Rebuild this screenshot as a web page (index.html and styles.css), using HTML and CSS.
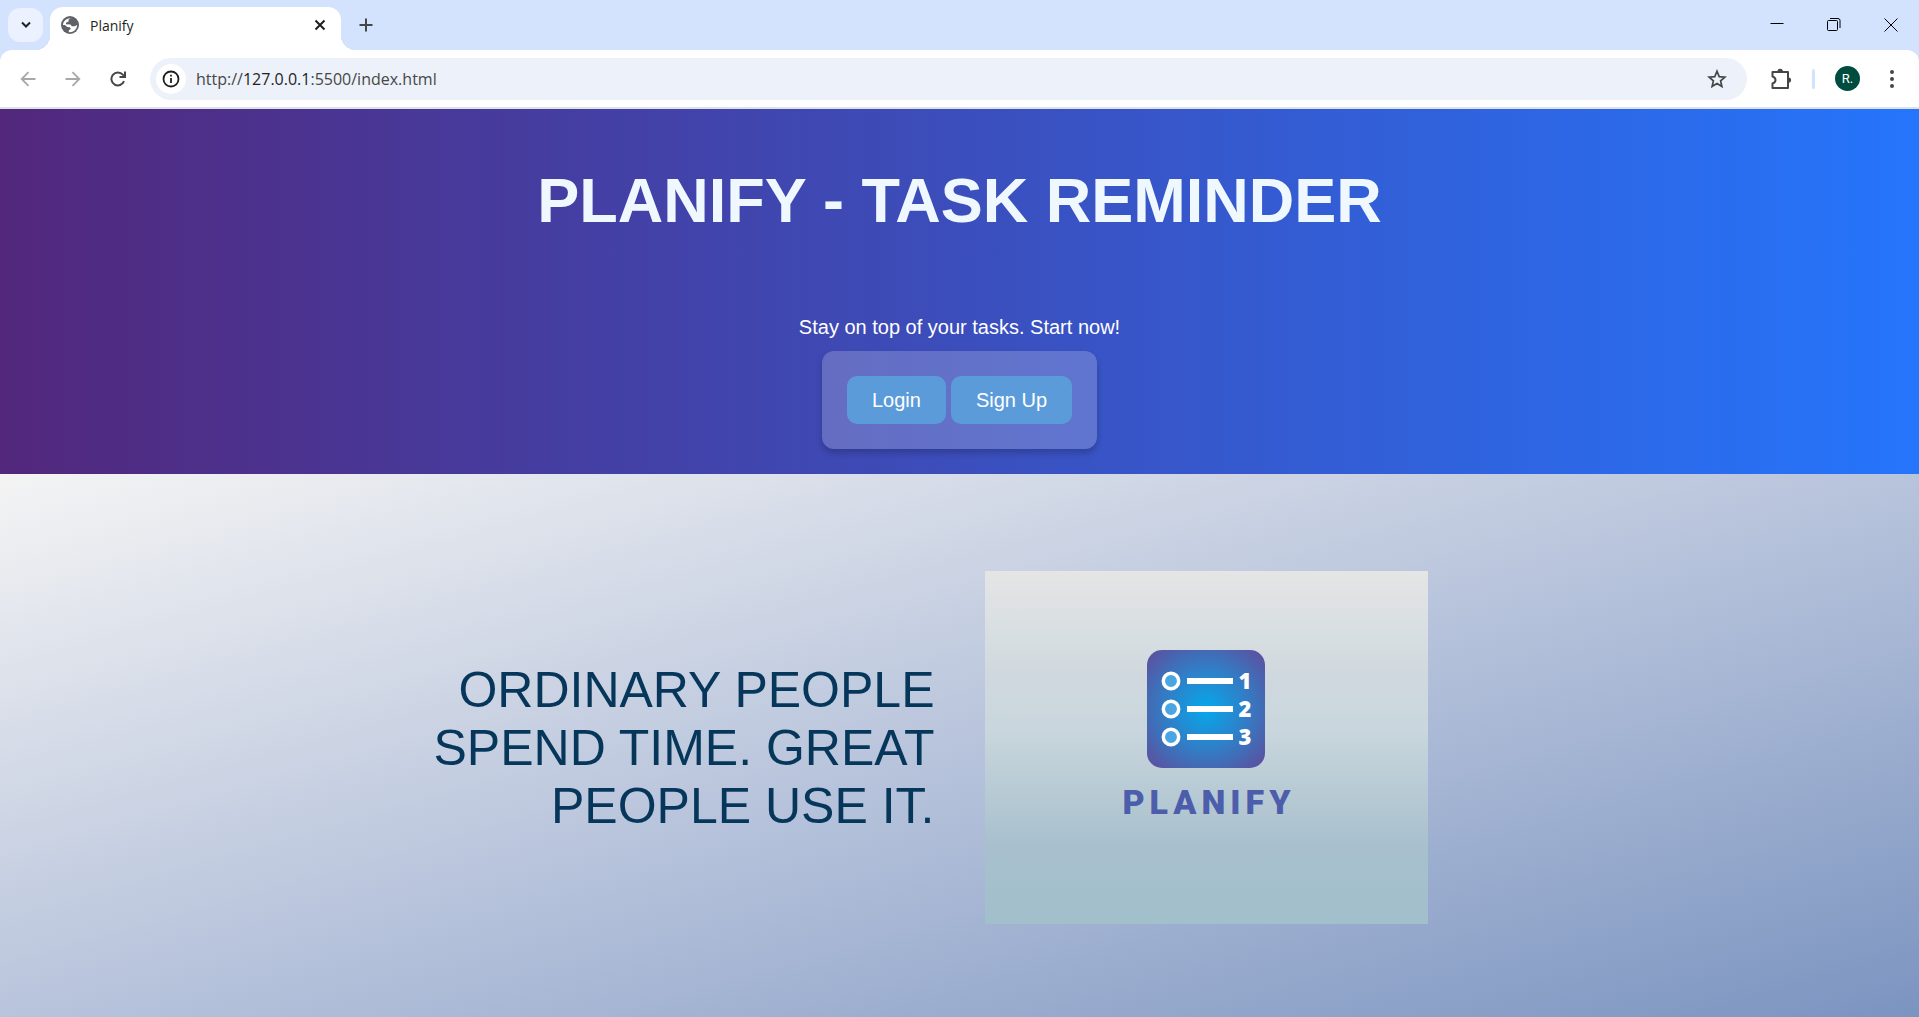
FILE: index.html
```html
<!DOCTYPE html>
<html lang="en">
<head>
<meta charset="utf-8">
<title>Planify</title>
<link rel="stylesheet" href="styles.css">
</head>
<body>
<div class="browser">
  <div class="tabstrip">
    <button class="tab-search" aria-label="Search tabs"><svg width="12" height="8" viewBox="0 0 12 8"><path d="M2 1.5l4 4 4-4" fill="none" stroke="#1f1f1f" stroke-width="2"/></svg></button>
    <div class="tab">
      <svg class="favicon" width="18" height="18" viewBox="0 0 18 18"><circle cx="9" cy="9" r="9" fill="#5f6368"/><path d="M10.5 1.8L7.6 3.4v2.1L5 6.8v1.5l4.5.2 1.3 1.8h2.7l2.7-1.4a7.3 7.3 0 0 1-8.4 7.2v-1.8l2-1.4-1-1.6-2.6-.2-2.3-2.2H1.8a7.3 7.3 0 0 1 8.7-6.6z" fill="#fff"/><path d="M10.5 1.8a7.3 7.3 0 0 1 5.7 6l-2 1.1-2.6-1.7.5-2.2-1.8-1.3z" fill="#5f6368"/></svg>
      <span class="tab-title">Planify</span>
      <button class="plain" aria-label="Close tab"><svg width="12" height="12" viewBox="0 0 12 12"><path d="M1.5 1.5l9 9M10.5 1.5l-9 9" stroke="#1f1f1f" stroke-width="2"/></svg></button>
    </div>
    <button class="plain new-tab" aria-label="New tab"><svg width="14" height="14" viewBox="0 0 14 14"><path d="M7 .5v13M.5 7h13" stroke="#444746" stroke-width="2"/></svg></button>
    <div class="window-controls">
      <button class="plain" aria-label="Minimize"><svg width="14" height="14" viewBox="0 0 14 14"><path d="M.5 5.500h13" stroke="#000"/></svg></button>
      <button class="plain" aria-label="Restore"><svg width="14" height="14" viewBox="0 0 14 14" fill="none" stroke="#000"><rect x=".5" y="2.500" width="10" height="10" rx="1"/><path d="M3 .5h8a2 2 0 0 1 2 2V10"/></svg></button>
      <button class="plain" aria-label="Close"><svg width="14" height="14" viewBox="0 0 14 14"><path d="M.5.5l13 13M13.500.5l-13 13" stroke="#000"/></svg></button>
    </div>
  </div>
  <div class="toolbar">
    <div class="nav">
      <button class="plain" aria-label="Back"><svg width="16" height="16" viewBox="0 0 16 16"><path d="M15.500 8H2M8.500 1.200L1.700 8l6.800 6.800" fill="none" stroke="#a8a8a8" stroke-width="1.800"/></svg></button>
      <button class="plain" aria-label="Forward"><svg width="16" height="16" viewBox="0 0 16 16"><path d="M.5 8H14M7.500 1.200L14.300 8l-6.800 6.800" fill="none" stroke="#a8a8a8" stroke-width="1.800"/></svg></button>
      <button class="plain" aria-label="Reload"><svg width="16" height="16" viewBox="0 0 16 16"><path d="M14 10.200A6.500 6.500 0 1 1 12.800 3.600L14.800 5.600M15 .5V6H9.500" fill="none" stroke="#444746" stroke-width="2"/></svg></button>
    </div>
    <div class="omnibox">
      <button class="site-info" aria-label="View site information"><svg width="18" height="18" viewBox="0 0 18 18"><circle cx="9" cy="9" r="7.500" fill="none" stroke="#1f1f1f" stroke-width="1.800"/><path d="M9 8v5M9 4.800v1.800" stroke="#1f1f1f" stroke-width="1.800"/></svg></button>
      <div class="url">http://<span class="host">127.0.0.1</span>:5500/index.html</div>
      <button class="plain" aria-label="Bookmark"><svg width="20" height="20" viewBox="0 0 20 20"><path d="M10 2.200l2.200 5.400 5.700.5-4.300 3.800 1.300 5.600-4.900-3-4.900 3 1.300-5.600L2.100 8.100l5.700-.5z" fill="none" stroke="#444746" stroke-width="1.700"/></svg></button>
    </div>
    <div class="actions">
      <button class="plain" aria-label="Extensions"><svg width="22" height="22" viewBox="0 0 22 22"><path d="M2.500 4h15.500v16H2.500v-4.500c2-.6 3-1.700 3-3.500s-1-2.900-3-3.500z" fill="none" stroke="#444746" stroke-width="2" stroke-linejoin="round"/><path d="M7.500 3.500a2.700 2.700 0 0 1 5.400 0zM18.500 9.500a2.600 2.600 0 0 1 0 5.200z" fill="#444746"/></svg></button>
      <span class="divider"></span>
      <button class="avatar" aria-label="Profile">R.</button>
      <button class="plain" aria-label="Menu"><svg width="4" height="18" viewBox="0 0 4 18" fill="#444746"><circle cx="2" cy="2" r="2"/><circle cx="2" cy="9" r="2"/><circle cx="2" cy="16" r="2"/></svg></button>
    </div>
  </div>
</div>
<header class="hero">
  <h1>PLANIFY - TASK REMINDER</h1>
  <p>Stay on top of your tasks. Start now!</p>
  <div class="auth">
    <button>Login</button>
    <button>Sign Up</button>
  </div>
</header>
<main class="intro">
  <p class="quote">ORDINARY PEOPLE SPEND TIME. GREAT PEOPLE USE IT.</p>
  <figure class="card">
    <svg class="logo" width="118" height="118" viewBox="0 0 118 118">
      <defs><radialGradient id="glow" cx="50%" cy="50%" r="66%"><stop offset="0" stop-color="#04a8ec"/><stop offset=".5" stop-color="#2f80c8"/><stop offset="1" stop-color="#5a52a0"/></radialGradient></defs>
      <rect width="118" height="118" rx="15" fill="url(#glow)"/>
      <g fill="#4aa6e2" stroke="#fff" stroke-width="3.500"><circle cx="24" cy="31" r="7.700"/><circle cx="24" cy="59" r="7.700"/><circle cx="24" cy="87" r="7.700"/></g>
      <path d="M40 31h46M40 59h46M40 87h46" stroke="#fff" stroke-width="6"/>
      <g class="digits"><text x="98" y="39">1</text><text x="98" y="67">2</text><text x="98" y="95">3</text></g>
    </svg>
    <figcaption>PLANIFY</figcaption>
  </figure>
</main>
</body>
</html>
```
FILE: styles.css
```css
* { box-sizing: border-box; }

body {
  display: flex;
  flex-direction: column;
  min-height: 100vh;
  margin: 0;
  font-family: Arial, "Liberation Sans", sans-serif;
}

button { font: inherit; border: 0; }
svg { display: block; }
h1, p, figure { margin: 0; }

.plain { padding: 0; background: none; }

/* Browser frame */
.browser {
  background: #d3e2fd;
  font-family: "Open Sans", "Noto Sans", sans-serif;
}

.tabstrip {
  display: flex;
  align-items: flex-end;
  height: 50px;
  padding-left: 8px;
}

.tab-search {
  display: grid;
  place-items: center;
  width: 35px;
  height: 34px;
  margin: 0 7px 8px 0;
  padding: 0;
  border-radius: 12px;
  background: #ebf1fe;
}

.tab {
  position: relative;
  display: flex;
  align-items: center;
  gap: 11px;
  width: 291px;
  height: 43px;
  padding: 0 15px 7px 11px;
  border-radius: 13px 13px 0 0;
  background: #fff;
}

.tab::before,
.tab::after {
  content: "";
  position: absolute;
  bottom: 0;
  width: 14px;
  height: 14px;
}

.tab::before { right: 100%; background: radial-gradient(circle at 0 0, transparent 14px, #fff 14px); }
.tab::after { left: 100%; background: radial-gradient(circle at 100% 0, transparent 14px, #fff 14px); }

.tab-title { flex: 1; font-size: 14px; color: #1f1f1f; }
.new-tab { margin: 0 0 18px 18px; }

.window-controls {
  display: flex;
  gap: 43px;
  margin-left: auto;
  padding: 0 21px 18px 0;
}

.toolbar {
  display: flex;
  align-items: center;
  height: 59px;
  border-bottom: 2px solid #dee2e6;
  border-radius: 12px 12px 0 0;
  background: #fff;
}

.nav { display: flex; gap: 29px; padding: 0 24px 0 20px; }

.omnibox {
  display: flex;
  flex: 1;
  align-items: center;
  gap: 10px;
  height: 42px;
  padding: 0 20px 0 6px;
  border-radius: 21px;
  background: #ecf1fa;
}

.site-info {
  display: grid;
  place-items: center;
  width: 30px;
  height: 30px;
  padding: 0;
  border-radius: 50%;
  background: #fff;
}

.url { flex: 1; font-size: 16px; color: #474747; }
.host { color: #1f1f1f; }

.actions { display: flex; align-items: center; padding: 0 25px 0 23px; }
.divider { width: 3px; height: 20px; margin: 0 20px; border-radius: 2px; background: #d3e2fd; }

.avatar {
  width: 25px;
  height: 25px;
  margin-right: 30px;
  padding: 0;
  border-radius: 50%;
  background: #004d40;
  color: #fff;
  font: 13px Roboto, sans-serif;
}

/* Page header */
.hero {
  display: flex;
  flex-direction: column;
  align-items: center;
  padding: 55px 20px 25px;
  background: linear-gradient(to right, #52277c, #2575fc);
  color: #fff;
  text-align: center;
}

.hero h1 {
  margin-bottom: 79px;
  color: #f0f8ff;
  font-size: 63px;
  line-height: 73px;
}

.hero p {
  margin-bottom: 12px;
  font-size: 20px;
  line-height: 23px;
}

.auth {
  display: flex;
  gap: 5px;
  padding: 25px;
  border-radius: 12px;
  background: rgba(255, 255, 255, 0.2);
  box-shadow: 0 4px 6px rgba(0, 0, 0, 0.2);
}

.auth button {
  height: 48px;
  padding: 0 25px;
  border-radius: 10px;
  background: #5c9bd9;
  color: #fff;
  font-size: 20px;
}

/* Intro */
.intro {
  display: grid;
  flex: 1;
  grid-template-columns: 1fr 1fr;
  align-items: center;
  gap: 50px;
  padding: 97px 0 93px;
  background: linear-gradient(to bottom right, #f4f4f4, #b8c4dc 50%, #7b94c0);
}

.quote {
  justify-self: end;
  max-width: 540px;
  color: #06375b;
  font-size: 50px;
  line-height: 58px;
  text-align: right;
}

.card {
  display: flex;
  flex-direction: column;
  align-items: center;
  width: 443px;
  height: 353px;
  padding-top: 79px;
  background: linear-gradient(#e5e5e5, #d5dde1 21%, #d0d8df 30%, #c9d6dd 45%, #a8c0cd 78%, #a2bfcc);
}

.digits {
  fill: #fff;
  font: 800 22px "Open Sans", sans-serif;
  text-anchor: middle;
}

.card figcaption {
  margin-top: 16px;
  padding-left: 6px;
  color: #4c5eab;
  font: 900 34px/36px Roboto, sans-serif;
  letter-spacing: 5px;
}
```
